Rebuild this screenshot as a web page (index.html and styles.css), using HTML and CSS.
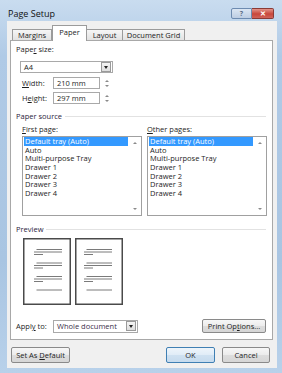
FILE: index.html
```html
<!DOCTYPE html>
<html lang="en">
<head>
    <meta charset="UTF-8">
    <title>Page Setup</title>
    <link rel="stylesheet" href="styles.css">
</head>
<body>
<div class="window">
    <div class="titlebar">
        <span class="title">Page Setup</span>
        <div class="caption">
            <span class="cbtn help">?</span>
            <span class="cbtn close">&#x2715;</span>
        </div>
    </div>

    <div class="client">
        <div class="tabs">
            <div class="tab t-margins">Margins</div>
            <div class="tab t-paper active">Paper</div>
            <div class="tab t-layout">Layout</div>
            <div class="tab t-grid">Document Grid</div>
        </div>

        <div class="panel">
            <div class="label">Pape<u>r</u> size:</div>
            <div class="combo size-combo">
                <span class="combo-text">A4</span>
                <span class="drop"><span class="tri"></span></span>
            </div>

            <div class="field-row first-field">
                <label class="field-label"><u>W</u>idth:</label>
                <div class="textbox">210 mm</div>
                <div class="spin"><span class="up"></span><span class="down"></span></div>
            </div>
            <div class="field-row">
                <label class="field-label">H<u>e</u>ight:</label>
                <div class="textbox">297 mm</div>
                <div class="spin"><span class="up"></span><span class="down"></span></div>
            </div>

            <div class="group-title source-title"><span>Paper source</span></div>
            <div class="sources">
                <div class="source-col">
                    <div class="sub-label"><u>F</u>irst page:</div>
                    <div class="listbox">
                        <ul class="items">
                            <li class="selected">Default tray (Auto)</li>
                            <li>Auto</li>
                            <li>Multi-purpose Tray</li>
                            <li>Drawer 1</li>
                            <li>Drawer 2</li>
                            <li>Drawer 3</li>
                            <li>Drawer 4</li>
                        </ul>
                        <div class="vscroll"><span class="up"></span><span class="down"></span></div>
                    </div>
                </div>
                <div class="source-col">
                    <div class="sub-label"><u>O</u>ther pages:</div>
                    <div class="listbox">
                        <ul class="items">
                            <li class="selected">Default tray (Auto)</li>
                            <li>Auto</li>
                            <li>Multi-purpose Tray</li>
                            <li>Drawer 1</li>
                            <li>Drawer 2</li>
                            <li>Drawer 3</li>
                            <li>Drawer 4</li>
                        </ul>
                        <div class="vscroll"><span class="up"></span><span class="down"></span></div>
                    </div>
                </div>
            </div>

            <div class="group-title preview-title"><span>Preview</span></div>
            <div class="preview">
                <svg class="page" width="48" height="67" viewBox="0 0 48 67">
                    <rect x="0.75" y="0.75" width="46.5" height="65.5" fill="#fff" stroke="#4a4a4a" stroke-width="1.5"/>
                    <g stroke="#7a7a7a" stroke-width="1">
                        <line x1="13.5" y1="11.5" x2="39" y2="11.5"/>
                        <line x1="11" y1="14" x2="39" y2="14"/>
                        <line x1="11" y1="16.5" x2="20" y2="16.5"/>
                        <line x1="13.5" y1="25" x2="39" y2="25"/>
                        <line x1="11" y1="27.5" x2="39" y2="27.5"/>
                        <line x1="11" y1="30" x2="20" y2="30"/>
                        <line x1="13.5" y1="38.5" x2="39" y2="38.5"/>
                        <line x1="11" y1="41" x2="39" y2="41"/>
                        <line x1="11" y1="43.5" x2="20" y2="43.5"/>
                        <line x1="13.5" y1="52" x2="39" y2="52"/>
                    </g>
                </svg>
                <svg class="page" width="48" height="67" viewBox="0 0 48 67">
                    <rect x="0.75" y="0.75" width="46.5" height="65.5" fill="#fff" stroke="#4a4a4a" stroke-width="1.5"/>
                    <g stroke="#7a7a7a" stroke-width="1">
                        <line x1="11.5" y1="11.5" x2="37" y2="11.5"/>
                        <line x1="9" y1="14" x2="37" y2="14"/>
                        <line x1="9" y1="16.5" x2="18" y2="16.5"/>
                        <line x1="11.5" y1="25" x2="37" y2="25"/>
                        <line x1="9" y1="27.5" x2="37" y2="27.5"/>
                        <line x1="9" y1="30" x2="18" y2="30"/>
                        <line x1="11.5" y1="38.5" x2="37" y2="38.5"/>
                        <line x1="9" y1="41" x2="37" y2="41"/>
                        <line x1="9" y1="43.5" x2="18" y2="43.5"/>
                        <line x1="11.5" y1="52" x2="37" y2="52"/>
                    </g>
                </svg>
            </div>

            <div class="apply-row">
                <label class="apply-label">Appl<u>y</u> to:</label>
                <div class="combo apply-combo">
                    <span class="combo-text">Whole document</span>
                    <span class="drop"><span class="tri"></span></span>
                </div>
                <button class="btn print-btn">Print Op<u>t</u>ions...</button>
            </div>
        </div>

        <div class="footer">
            <button class="btn default-btn">Set As <u>D</u>efault</button>
            <button class="btn ok-btn">OK</button>
            <button class="btn cancel-btn">Cancel</button>
        </div>
    </div>
</div>
</body>
</html>
```

FILE: styles.css
```css
* {
    box-sizing: border-box;
}

body {
    margin: 0;
    font-family: "Open Sans", "Noto Sans", sans-serif;
    font-size: 7.5px;
    color: #1e1e1e;
}

u {
    text-decoration: underline;
    text-underline-offset: 1px;
}

.window {
    width: 282px;
    height: 373px;
    padding: 0 5px 5px 7px;
    display: flex;
    flex-direction: column;
    background: linear-gradient(to bottom, #c9dcef, #b0cae6 15%, #a9c5e2 70%, #b8d1ea);
    overflow: hidden;
}

/* title bar */
.titlebar {
    height: 21px;
    display: flex;
    align-items: flex-start;
}

.title {
    font-size: 9px;
    line-height: 10px;
    margin-top: 9px;
    padding-left: 1px;
    color: #111;
}

.caption {
    margin-left: auto;
    margin-right: 3px;
    margin-top: 8px;
    display: flex;
}

.cbtn {
    height: 11px;
    display: flex;
    align-items: center;
    justify-content: center;
    font-size: 7px;
    font-weight: bold;
    border: 1px solid #6d8bb0;
}

.help {
    width: 21px;
    color: #5c6e86;
    background: linear-gradient(#dbe6f3, #bccde2);
    border-radius: 2px 0 0 2px;
}

.close {
    width: 22px;
    color: #fff;
    background: linear-gradient(#e3948a, #c8473b 55%, #d0635a);
    border-color: #8a3a35;
    border-left: none;
    border-radius: 0 2px 2px 0;
}

/* client area */
.client {
    flex: 1;
    background: #f0f0f0;
    padding: 4px 4px 0 3px;
    display: flex;
    flex-direction: column;
}

.tabs {
    height: 15px;
    display: flex;
    align-items: flex-end;
    padding-left: 2px;
    position: relative;
    z-index: 1;
}

.tab {
    height: 11px;
    line-height: 10px;
    text-align: center;
    border: 1px solid #9b9b9b;
    border-bottom: none;
    background: linear-gradient(#f6f6f6, #e2e2e2);
}

.tab + .tab {
    border-left: none;
}

.t-margins { width: 40px; }
.t-paper { width: 35px; }
.t-layout { width: 36px; }
.t-grid { width: 62px; }

.tab.active {
    height: 16px;
    margin-bottom: -1px;
    line-height: 13px;
    background: #fff;
    border-left: 1px solid #9b9b9b;
}

.tab.active + .tab {
    border-left: none;
}

.panel {
    height: 300px;
    background: #fff;
    border: 1px solid #a8a8a8;
    padding: 3px 6px 0 5px;
}

.label {
    line-height: 10px;
}

/* combos and text boxes */
.combo {
    display: flex;
    align-items: center;
    border: 1px solid #a9a9a9;
    background: #fff;
}

.combo-text {
    flex: 1;
    padding-left: 3px;
}

.drop {
    width: 10px;
    height: 10px;
    margin-right: 1px;
    border: 1px solid #9a9a9a;
    background: linear-gradient(#f4f4f4, #dedede);
    display: flex;
    align-items: center;
    justify-content: center;
}

.tri {
    width: 0;
    height: 0;
    border-left: 2.5px solid transparent;
    border-right: 2.5px solid transparent;
    border-top: 3px solid #222;
}

.size-combo {
    width: 93px;
    height: 12px;
    margin: 7px 0 0 4px;
}

.field-row {
    display: flex;
    align-items: center;
    height: 12px;
    margin: 3px 0 0 6px;
}

.first-field {
    margin-top: 4px;
}

.field-label {
    width: 31px;
}

.textbox {
    width: 47px;
    height: 12px;
    line-height: 10px;
    padding-left: 3px;
    border: 1px solid #a9a9a9;
}

.spin {
    width: 11px;
    height: 12px;
    margin-left: 1px;
    display: flex;
    flex-direction: column;
    align-items: center;
    justify-content: space-around;
    padding: 1px 0;
}

.spin .up,
.vscroll .up {
    width: 0;
    height: 0;
    border-left: 2px solid transparent;
    border-right: 2px solid transparent;
    border-bottom: 2px solid #8a8a8a;
}

.spin .down,
.vscroll .down {
    width: 0;
    height: 0;
    border-left: 2px solid transparent;
    border-right: 2px solid transparent;
    border-top: 2px solid #8a8a8a;
}

/* group headings */
.group-title {
    display: flex;
    align-items: center;
    line-height: 10px;
    color: #2b2540;
}

.group-title::after {
    content: "";
    flex: 1;
    margin-left: 3px;
    border-top: 1px solid #e2e2e2;
}

.source-title {
    margin-top: 7px;
}

.preview-title {
    margin-top: 8px;
}

/* paper source lists */
.sources {
    display: grid;
    grid-template-columns: 120px 120px;
    column-gap: 5px;
    margin: 3px 0 0 6px;
}

.sub-label {
    line-height: 10px;
}

.listbox {
    height: 80px;
    margin-top: 2px;
    border: 1px solid #a0a0a0;
    display: flex;
}

.items {
    flex: 1;
    list-style: none;
    margin: 0;
    padding: 0 1px;
}

.items li {
    height: 8.7px;
    line-height: 8.7px;
    padding-left: 1px;
}

.items li.selected {
    background: #3399ff;
    color: #fff;
}

.vscroll {
    width: 12px;
    display: flex;
    flex-direction: column;
    align-items: center;
    justify-content: space-between;
    padding: 5px 0 5px;
}

/* preview */
.preview {
    display: flex;
    gap: 4px;
    margin: 4px 0 0 7px;
}

.page {
    display: block;
}

/* apply row */
.apply-row {
    display: flex;
    align-items: center;
    height: 14px;
    margin-top: 14px;
}

.apply-label {
    width: 37px;
}

.apply-combo {
    width: 85px;
    height: 13px;
    color: #3a2f4a;
}

.btn {
    font-family: inherit;
    font-size: 7.5px;
    color: #1e1e1e;
    padding: 0;
    border: 1px solid #8a8a8a;
    border-radius: 2px;
    background: linear-gradient(#f7f7f7, #ececec 50%, #dddddd 51%, #d6d6d6);
}

.print-btn {
    width: 64px;
    height: 14px;
    margin-left: auto;
}

/* footer buttons */
.footer {
    display: flex;
    padding: 7px 3px 0 1px;
    gap: 7px;
}

.footer .btn {
    height: 16px;
}

.default-btn {
    width: 59px;
}

.ok-btn {
    width: 49px;
    margin-left: auto;
    border-color: #3f7fb3;
    background: linear-gradient(#eef5fb, #e0ecf7 50%, #cfe1f1 51%, #c6dbee);
}

.cancel-btn {
    width: 48px;
}
```
